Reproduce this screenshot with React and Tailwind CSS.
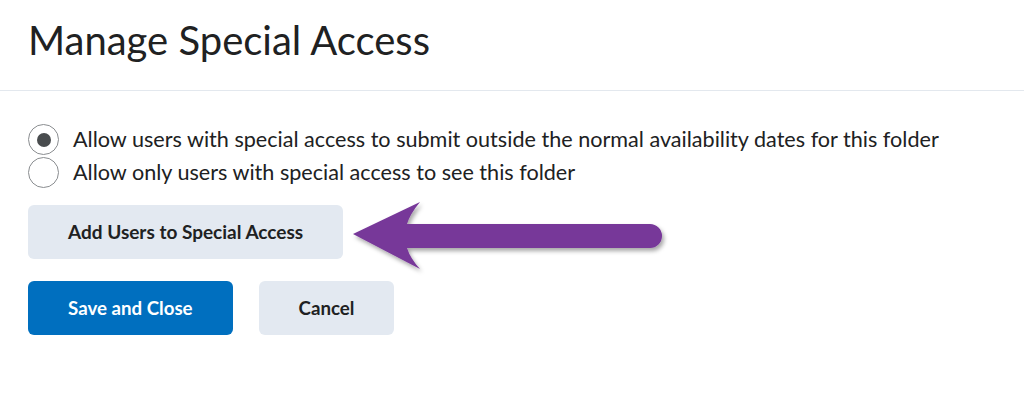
import React, { useState } from 'react';

const Radio = ({ checked, onClick, label }) => (
  <label className="flex h-[33px] items-center cursor-pointer" onClick={onClick}>
    <span className="flex h-[31px] w-[31px] shrink-0 items-center justify-center rounded-full border-[1.5px] border-[#8a8d90] bg-white">
      {checked && <span className="h-[14px] w-[14px] rounded-full bg-[#494c4e]" />}
    </span>
    <span className="ml-[14px] text-[21.6px] leading-none text-[#202122]">{label}</span>
  </label>
);

const Arrow = () => (
  <svg
    className="pointer-events-none absolute left-[316px] top-[-13px]"
    width="340"
    height="90"
    viewBox="0 0 340 90"
  >
    <defs>
      <filter id="arrowShadow" x="-10%" y="-30%" width="120%" height="160%">
        <feDropShadow dx="2" dy="3" stdDeviation="2" floodColor="#000" floodOpacity="0.35" />
      </filter>
    </defs>
    <path
      d="M9 42 L76 10 Q66 22 63 32 L306 32 A12 12 0 0 1 306 56 L63 56 Q66 66 76 77 Z"
      fill="#773799"
      filter="url(#arrowShadow)"
    />
  </svg>
);

export default function App() {
  const [choice, setChoice] = useState('dates');

  return (
    <div className="min-h-[399px] w-full bg-white" style={{ fontFamily: 'Lato, "Open Sans", sans-serif' }}>
      <div className="border-b border-[#e3e8ee] px-[28px] pt-[16px] pb-[26px]">
        <h1 className="text-[40px] font-normal leading-[1.2] text-[#202122]">Manage Special Access</h1>
      </div>

      <div className="px-[28px] pt-[32px]">
        <Radio
          checked={choice === 'dates'}
          onClick={() => setChoice('dates')}
          label="Allow users with special access to submit outside the normal availability dates for this folder"
        />
        <Radio
          checked={choice === 'see'}
          onClick={() => setChoice('see')}
          label="Allow only users with special access to see this folder"
        />

        <div className="relative mt-[16px] flex">
          <button className="h-[54px] rounded-md bg-[#e3e9f1] px-10 text-[19px] font-bold text-[#202122]">
            Add Users to Special Access
          </button>
          <Arrow />
        </div>

        <div className="mt-[22px] flex gap-[26px]">
          <button className="h-[54px] rounded-md bg-[#006fbf] px-10 text-[18.7px] font-bold text-white">
            Save and Close
          </button>
          <button className="h-[54px] rounded-md bg-[#e3e9f1] px-10 text-[18.7px] font-bold text-[#202122]">
            Cancel
          </button>
        </div>
      </div>
    </div>
  );
}
